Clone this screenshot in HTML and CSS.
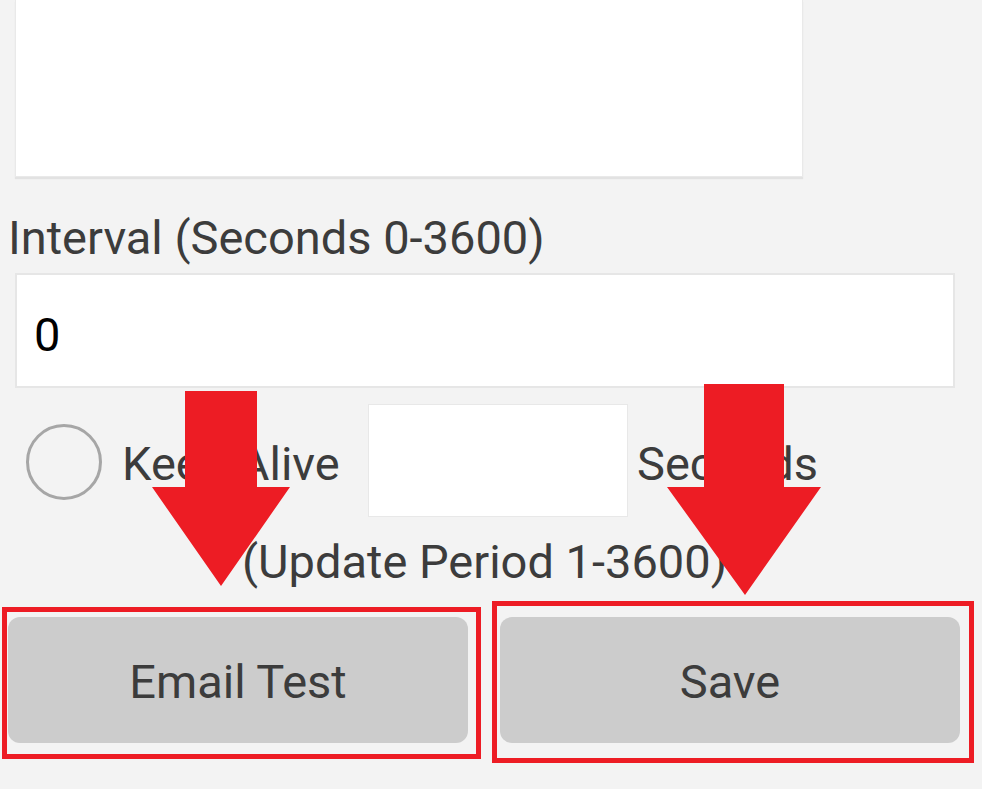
FILE: index.html
```html
<!DOCTYPE html>
<html lang="en">
<head>
<meta charset="utf-8">
<title>Email Settings</title>
<link rel="stylesheet" href="styles.css">
</head>
<body>
<div class="page">
  <div class="message-box"></div>
  <div class="field-label">Interval (Seconds 0-3600)</div>
  <div class="text-input">0</div>
  <div class="keep-row">
    <span class="radio"></span>
    <span class="keep-label">Keep Alive</span>
    <span class="small-input"></span>
    <span class="unit">Seconds</span>
  </div>
  <div class="hint">(Update Period 1-3600)</div>
  <div class="button-row">
    <div class="btn">Email Test</div>
    <div class="btn">Save</div>
  </div>

  <div class="annot annot-box annot-box-left"></div>
  <div class="annot annot-box annot-box-right"></div>
  <svg class="annot annot-arrows" width="982" height="789" viewBox="0 0 982 789">
    <polygon points="185,391 257,391 257,487 290,487 221,586 152,487 185,487" fill="#ed1c24"/>
    <polygon points="704,384 784,384 784,487 821,487 745,595 667,487 704,487" fill="#ed1c24"/>
  </svg>
</div>
</body>
</html>
```
FILE: styles.css
```css
html, body {
  margin: 0;
  padding: 0;
}
body {
  background: #f3f3f3;
  font-family: Roboto, "Noto Sans", sans-serif;
  color: #3c3c3c;
}
.page {
  position: relative;
  width: 982px;
  height: 789px;
  overflow: hidden;
}
.message-box {
  box-sizing: border-box;
  margin-left: 15px;
  width: 788px;
  height: 177px;
  background: #fff;
  border: 1px solid #e9e9e9;
  border-top: none;
  box-shadow: 0 2px 1px #e2e2e2;
}
.field-label {
  margin-top: 33px;
  padding-left: 8px;
  font-size: 47px;
  line-height: 56px;
  height: 56px;
}
.text-input {
  box-sizing: border-box;
  margin-top: 7px;
  margin-left: 15px;
  width: 940px;
  height: 115px;
  background: #fff;
  border: 2px solid #e6e6e6;
  padding: 32px 0 0 17px;
  font-size: 47px;
  line-height: 56px;
  color: #000;
}
.keep-row {
  display: flex;
  align-items: center;
  margin-top: 16px;
  height: 113px;
}
.radio {
  flex: none;
  box-sizing: border-box;
  width: 76px;
  height: 76px;
  margin-left: 26px;
  margin-top: 3px;
  border: 3px solid #a6a6a6;
  border-radius: 50%;
}
.keep-label {
  flex: none;
  width: 266px;
  box-sizing: border-box;
  padding-left: 20px;
  font-size: 47px;
  line-height: 56px;
  margin-top: 7px;
}
.small-input {
  flex: none;
  box-sizing: border-box;
  width: 260px;
  height: 113px;
  background: #fff;
  border: 1px solid #e8e8e8;
}
.unit {
  margin-left: 9px;
  font-size: 47px;
  line-height: 56px;
  margin-top: 6px;
}
.hint {
  margin-top: 17px;
  margin-left: 15px;
  width: 939px;
  text-align: center;
  font-size: 47px;
  line-height: 56px;
  height: 56px;
}
.button-row {
  display: flex;
  gap: 32px;
  margin-top: 27px;
  padding-left: 8px;
}
.btn {
  box-sizing: border-box;
  width: 460px;
  height: 126px;
  padding-top: 3px;
  border-radius: 12px;
  background: #cccccc;
  display: flex;
  align-items: center;
  justify-content: center;
  font-size: 47px;
  line-height: 56px;
  color: #3c3c3c;
}
.annot {
  position: absolute;
  pointer-events: none;
}
.annot-box {
  box-sizing: border-box;
  border: 5px solid #ed1c24;
}
.annot-box-left {
  left: 2px;
  top: 607px;
  width: 479px;
  height: 152px;
}
.annot-box-right {
  left: 492px;
  top: 601px;
  width: 482px;
  height: 162px;
}
.annot-arrows {
  left: 0;
  top: 0;
}
```
